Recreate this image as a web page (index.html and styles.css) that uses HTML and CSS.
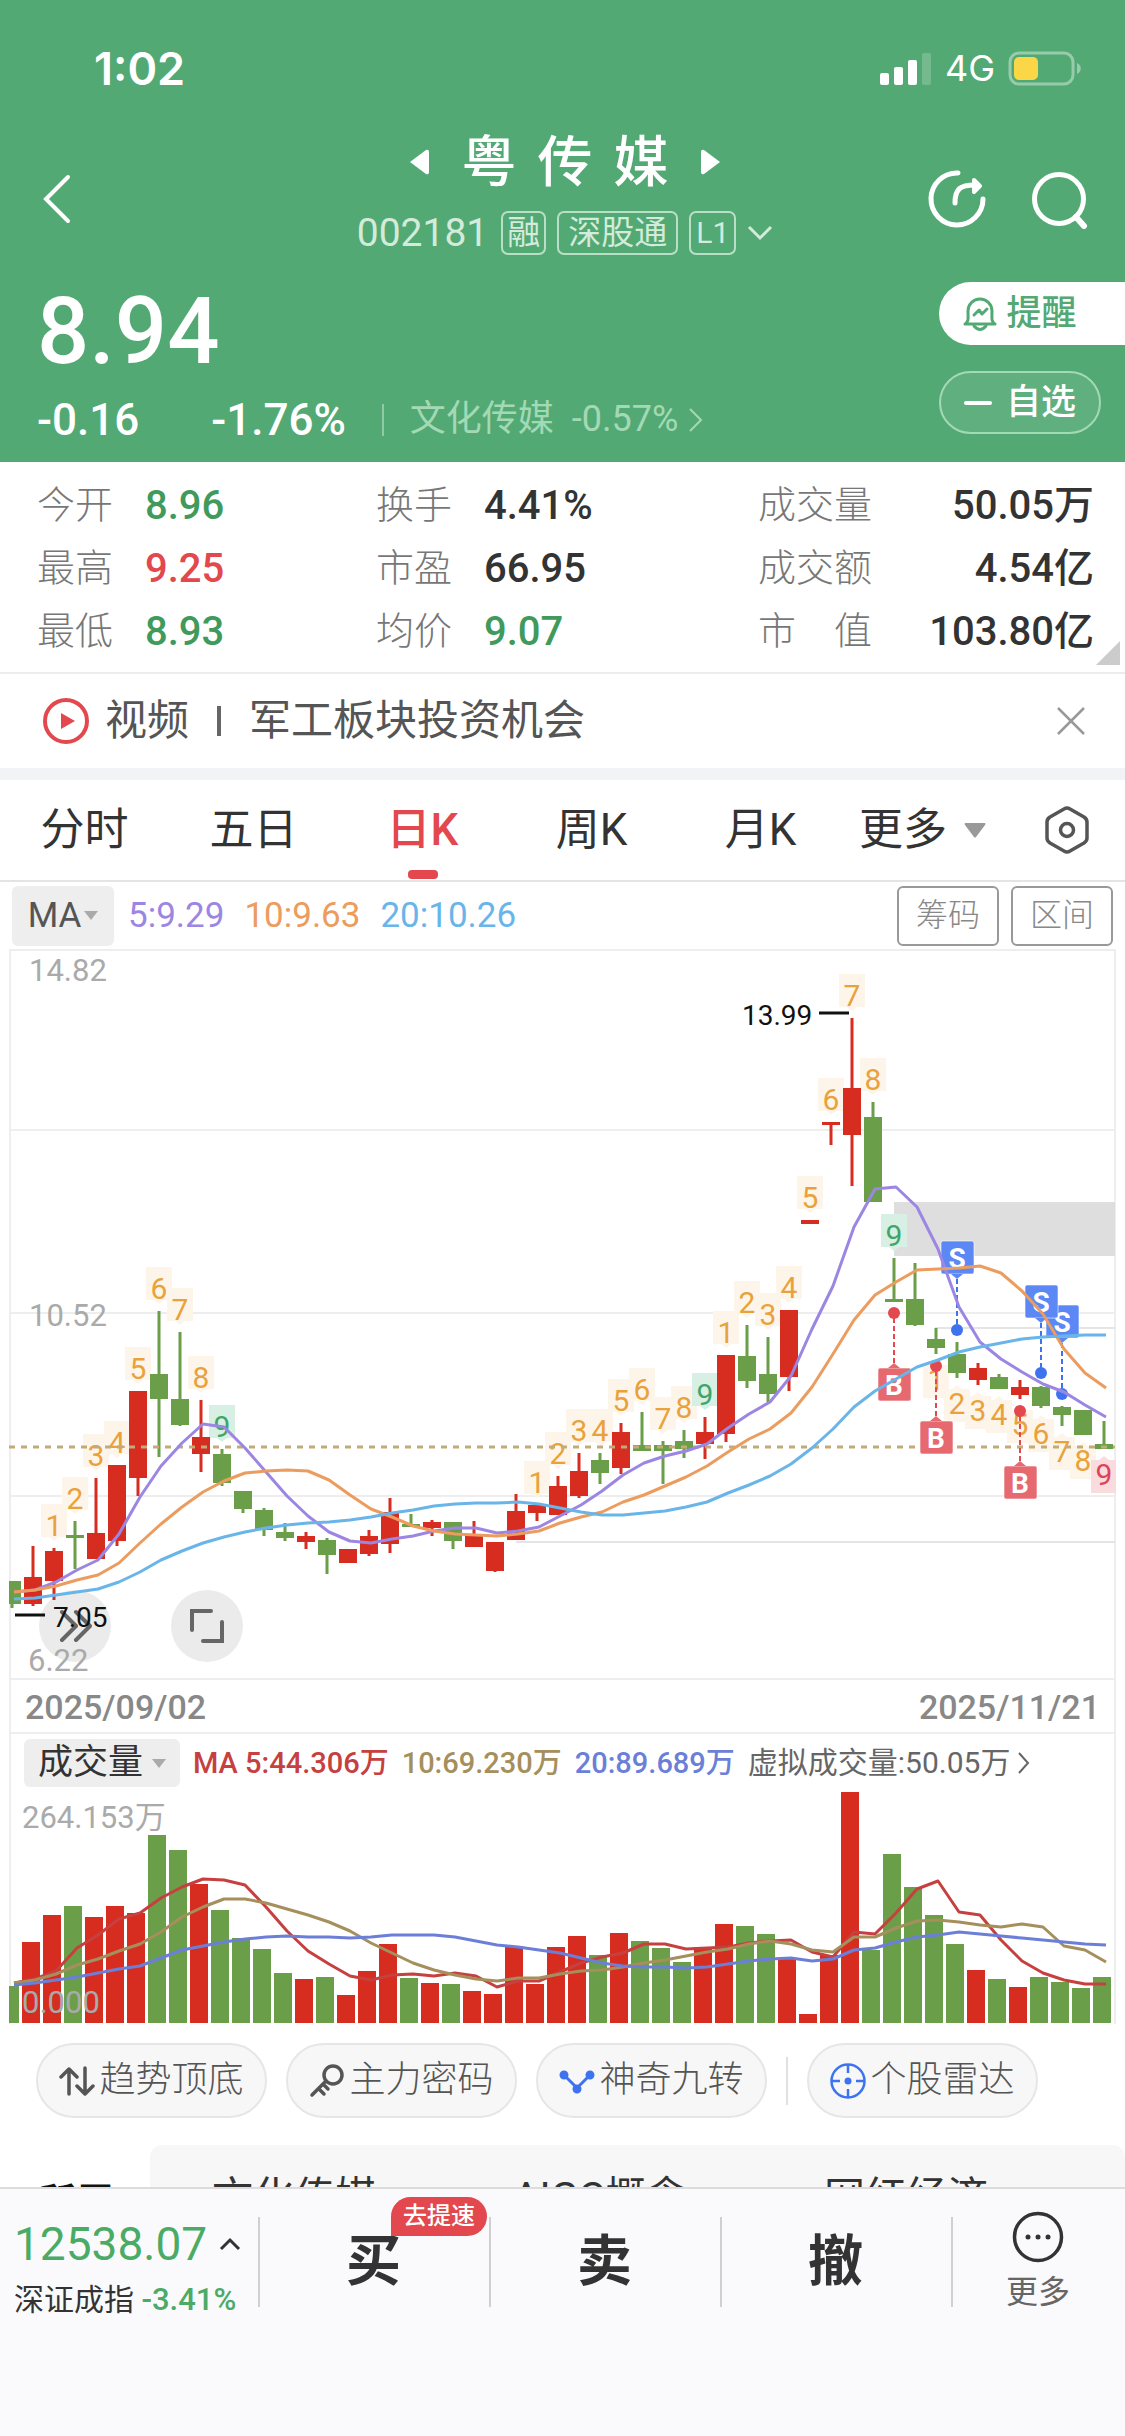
FILE: index.html
```
<!DOCTYPE html>
<html lang="zh-CN">
<head>
    <meta charset="UTF-8">
    <meta name="viewport" content="width=device-width, initial-scale=1.0">
    <title>粤传媒 002181</title>
    <link rel="stylesheet" href="styles.css">
</head>
<body>
    <div class="app">
        <main class="content">
            <header class="quote">
                <div class="status">
                    <span class="status-time">1:02</span>
                    <div class="status-right">
                        <svg width="52" height="32" viewBox="0 0 52 32" fill="#fff">
                            <rect x="0" y="20" width="9" height="12" rx="2"/>
                            <rect x="14" y="14" width="9" height="18" rx="2"/>
                            <rect x="28" y="7" width="9" height="25" rx="2"/>
                            <rect x="42" y="0" width="9" height="32" rx="2" opacity=".2"/>
                        </svg>
                        <span class="status-net">4G</span>
                        <svg width="74" height="36" viewBox="0 0 74 36">
                            <rect x="2" y="2" width="63" height="31" rx="9" fill="none" stroke="#fff" stroke-opacity=".4" stroke-width="3"/>
                            <rect x="6" y="6" width="24" height="23" rx="5" fill="#fbd748"/>
                            <path d="M69 12c5 2 5 9 0 11z" fill="#fff" fill-opacity=".4"/>
                        </svg>
                    </div>
                </div>

                <div class="nav">
                    <button class="icon-btn back" aria-label="返回">
                        <svg width="30" height="52" viewBox="0 0 30 52" fill="none" stroke="#fff" stroke-width="4" stroke-linecap="round"><path d="M26 4 4 26l22 22"/></svg>
                    </button>
                    <div class="stock">
                        <div class="stock-name">
                            <button class="icon-btn" aria-label="上一只"><svg width="19" height="26" viewBox="0 0 19 26" fill="#fff"><path d="M0 13 16 1q3-1 3 2v20q0 3-3 2z"/></svg></button>
                            <h1><span>粤</span><span>传</span><span>媒</span></h1>
                            <button class="icon-btn" aria-label="下一只"><svg width="19" height="26" viewBox="0 0 19 26" fill="#fff"><path d="M19 13 3 1Q0 0 0 3v20q0 3 3 2z"/></svg></button>
                        </div>
                        <div class="stock-code">
                            <span class="code">002181</span>
                            <span class="tag tag-tight">融</span>
                            <span class="tag">深股通</span>
                            <span class="tag tag-level">L1</span>
                            <svg width="26" height="16" viewBox="0 0 26 16" fill="none" stroke="#d4ebdc" stroke-width="3"><path d="m2 2 11 11L24 2"/></svg>
                        </div>
                    </div>
                    <div class="nav-actions">
                        <button class="icon-btn" aria-label="分享">
                            <svg width="58" height="60" viewBox="0 0 58 60" fill="none" stroke="#fff" stroke-width="5" stroke-linecap="round" stroke-linejoin="round">
                                <path d="M30 4A26 26 0 1 0 55 30"/>
                                <path d="M27 34c0-14 5-18 20-18"/>
                                <path d="M46 11l6 6-6 6z" fill="#fff" stroke-width="4"/>
                            </svg>
                        </button>
                        <button class="icon-btn" aria-label="搜索">
                            <svg width="58" height="60" viewBox="0 0 58 60" fill="none" stroke="#fff" stroke-width="5" stroke-linecap="round">
                                <circle cx="29" cy="30" r="24.500"/>
                                <path d="m46 48 8 9" stroke-width="6"/>
                            </svg>
                        </button>
                    </div>
                </div>

                <div class="price-row">
                    <div class="price-box">
                        <div class="price">8.94</div>
                        <div class="change">
                            <span>-0.16</span>
                            <span class="change-pct">-1.76%</span>
                            <a class="industry" href="#industry">
                                <span>文化传媒</span>
                                <span>-0.57%</span>
                                <svg width="16" height="26" viewBox="0 0 16 26" fill="none" stroke="currentColor" stroke-width="2"><path d="m2 2 11 11L2 24"/></svg>
                            </a>
                        </div>
                    </div>
                    <div class="price-actions">
                        <button class="pill pill-alert">
                            <svg width="34" height="36" viewBox="0 0 34 36" fill="none" stroke="currentColor" stroke-width="3" stroke-linecap="round" stroke-linejoin="round">
                                <path d="M2 28c4-2 3-6 3-13a12 12 0 0 1 24 0c0 7-1 11 3 13z"/>
                                <path d="M11 30q6 7 12 0"/>
                                <path d="m11 19 5-5 3 4 5-5"/>
                            </svg>
                            提醒
                        </button>
                        <button class="pill pill-watch">
                            <svg width="28" height="4" viewBox="0 0 28 4"><rect width="28" height="4" rx="2" fill="#fff"/></svg>
                            自选
                        </button>
                    </div>
                </div>
            </header>

            <section class="stats">
                <dl>
                    <div><dt>今开</dt><dd class="down">8.96</dd></div>
                    <div><dt>最高</dt><dd class="up">9.25</dd></div>
                    <div><dt>最低</dt><dd class="down">8.93</dd></div>
                </dl>
                <dl>
                    <div><dt>换手</dt><dd>4.41%</dd></div>
                    <div><dt>市盈</dt><dd>66.95</dd></div>
                    <div><dt>均价</dt><dd class="down">9.07</dd></div>
                </dl>
                <dl class="stats-wide">
                    <div><dt>成交量</dt><dd>50.05万</dd></div>
                    <div><dt>成交额</dt><dd>4.54亿</dd></div>
                    <div><dt>市　值</dt><dd>103.80亿</dd></div>
                </dl>
            </section>

            <section class="news">
                <svg width="46" height="46" viewBox="0 0 46 46"><circle cx="23" cy="23" r="21" fill="none" stroke="#e2484d" stroke-width="4"/><path d="m18 15 14 8-14 8z" fill="#e2484d"/></svg>
                <a href="#video"><span>视频</span><span class="news-bar"></span><span>军工板块投资机会</span></a>
                <button class="icon-btn news-close" aria-label="关闭">
                    <svg width="28" height="28" viewBox="0 0 28 28" stroke="#999" stroke-width="2.500"><path d="m1 1 26 26M27 1 1 27"/></svg>
                </button>
            </section>

            <nav class="tabs">
                <button>分时</button>
                <button>五日</button>
                <button class="active">日K</button>
                <button>周K</button>
                <button>月K</button>
                <button class="tab-more">更多 <svg width="22" height="15" viewBox="0 0 22 15" fill="#999"><path d="M1 0h20q1 1 0 2L12 14q-1 1-2 0L1 2q-1-1 0-2z"/></svg></button>
                <button aria-label="设置">
                    <svg width="44" height="48" viewBox="0 0 44 48" fill="none" stroke="#555" stroke-width="3.500" stroke-linejoin="round"><path d="M19 3q3-2 6 0l14 8q3 2 3 5v16q0 3-3 5l-14 8q-3 2-6 0L5 37q-3-2-3-5V16q0-3 3-5z"/><circle cx="22" cy="24" r="6.500"/></svg>
                </button>
            </nav>

            <div class="ma-row">
                <button class="ma-select">MA <svg width="14" height="9" viewBox="0 0 14 9" fill="#aaa"><path d="M0 0h14L7 9z"/></svg></button>
                <span class="ma5">5:9.29</span>
                <span class="ma10">10:9.63</span>
                <span class="ma20">20:10.26</span>
                <div class="ma-actions">
                    <button>筹码</button>
                    <button>区间</button>
                </div>
            </div>

            <section class="charts">
                <div class="kline">
                    <svg id="kline" viewBox="9 0 1107 731"></svg>
                    <div class="kline-tools">
                        <button aria-label="展开"><svg width="34" height="34" viewBox="0 0 34 34" fill="none" stroke="#666" stroke-width="4" stroke-linecap="round" stroke-linejoin="round"><path d="m4 3 14 14L4 31M18 3l14 14-14 14"/></svg></button>
                        <button aria-label="全屏"><svg width="34" height="34" viewBox="0 0 34 34" fill="none" stroke="#666" stroke-width="4" stroke-linecap="round"><path d="M2 21V2h19M32 13v19H13"/></svg></button>
                    </div>
                </div>
                <div class="dates"><time>2025/09/02</time><time>2025/11/21</time></div>
                <div class="volume-head">
                    <button class="volume-select">成交量 <svg width="14" height="9" viewBox="0 0 14 9" fill="#aaa"><path d="M0 0h14L7 9z"/></svg></button>
                    <span class="v5">MA 5:44.306万</span>
                    <span class="v10">10:69.230万</span>
                    <span class="v20">20:89.689万</span>
                    <a href="#volume">虚拟成交量:50.05万 <svg width="12" height="22" viewBox="0 0 12 22" fill="none" stroke="#666" stroke-width="2"><path d="m1 1 9 10-9 10"/></svg></a>
                </div>
                <svg id="volume" viewBox="9 0 1107 234"></svg>
            </section>

            <div class="chips">
                <button>
                    <svg width="36" height="30" viewBox="0 0 36 30" fill="none" stroke="#555" stroke-width="3.500" stroke-linecap="round" stroke-linejoin="round"><path d="M10 28V3M2 11l8-8 8 8M26 2v25M18 20l8 8 8-8"/></svg>
                    趋势顶底
                </button>
                <button>
                    <svg width="36" height="34" viewBox="0 0 36 34" fill="none" stroke="#555" stroke-width="3.500" stroke-linecap="round"><circle cx="24" cy="11" r="9"/><path d="M17 17 3 31M10 25l5 5M14 20l5 5"/></svg>
                    主力密码
                </button>
                <button>
                    <svg width="36" height="26" viewBox="0 0 36 26" fill="#3e73f0" stroke="#3e73f0" stroke-width="3"><path d="M5 7 18 20 31 7" fill="none"/><circle cx="5" cy="7" r="3"/><circle cx="18" cy="21" r="3"/><circle cx="31" cy="7" r="3"/></svg>
                    神奇九转
                </button>
                <span class="chips-line"></span>
                <button>
                    <svg width="36" height="36" viewBox="0 0 36 36" fill="none" stroke="#3e73f0" stroke-width="2.500"><circle cx="18" cy="18" r="16.500"/><path d="M18 2v8M18 26v8M2 18h8M26 18h8"/><circle cx="18" cy="18" r="3.500" fill="#3e73f0" stroke="none"/></svg>
                    个股雷达
                </button>
            </div>

            <section class="concepts">
                <h2>所属</h2>
                <div class="concept-list"><a href="#c1">文化传媒</a><a href="#c2">AIGC概念</a><a href="#c3">网红经济</a></div>
            </section>
        </main>

        <footer class="trade">
            <button class="index">
                <span class="index-value">12538.07 <svg width="22" height="14" viewBox="0 0 22 14" fill="none" stroke="#333" stroke-width="3"><path d="m2 12 9-9 9 9"/></svg></span>
                <span class="index-name">深证成指 <b>-3.41%</b></span>
            </button>
            <button class="trade-btn">买<span class="badge">去提速</span></button>
            <button class="trade-btn">卖</button>
            <button class="trade-btn">撤</button>
            <button class="more">
                <svg width="52" height="52" viewBox="0 0 52 52" fill="none" stroke="#333" stroke-width="3.500"><circle cx="26" cy="26" r="23.500"/><g fill="#333" stroke="none"><circle cx="16" cy="26" r="2.500"/><circle cx="26" cy="26" r="2.500"/><circle cx="36" cy="26" r="2.500"/></g></svg>
                更多
            </button>
        </footer>
    </div>
    <script src="chart.js"></script>
</body>
</html>
```
FILE: styles.css
```
:root {
    --green: #53a974;
    --down: #3f9a5c;
    --up: #e2484d;
    --text: #333;
    --muted: #888;
    --line: #eee;
    --font: Roboto, "Noto Sans CJK SC", sans-serif;
}

* {
    box-sizing: border-box;
    margin: 0;
    padding: 0;
}

body {
    background: #fff;
    color: var(--text);
    font-family: var(--font);
    line-height: 1.2;
}

button {
    background: none;
    border: none;
    color: inherit;
    font: inherit;
    cursor: pointer;
}

a {
    color: inherit;
    text-decoration: none;
}

svg {
    display: block;
    flex: none;
}

.app {
    height: 100vh;
    display: flex;
    flex-direction: column;
}

.content {
    flex: 1;
    min-height: 0;
    overflow-y: auto;
    scrollbar-width: none;
}

.icon-btn {
    display: flex;
}

/* header */
.quote {
    background: var(--green);
    color: #fff;
    height: 462px;
}

.status {
    height: 138px;
    padding: 0 43px 0 94px;
    display: flex;
    align-items: center;
    justify-content: space-between;
    font-family: Inter, sans-serif;
}

.status-time {
    font-size: 45px;
    font-weight: 600;
}

.status-right {
    display: flex;
    align-items: center;
    gap: 13px;
}

.status-net {
    font-size: 36px;
}

.nav {
    height: 122px;
    padding: 0 37px 0 42px;
    display: grid;
    grid-template-columns: 1fr auto 1fr;
    align-items: center;
}

.stock {
    align-self: start;
}

.stock-name,
.stock-code {
    display: flex;
    align-items: center;
    justify-content: center;
}

.stock-name {
    height: 48px;
    gap: 32px;
}

.stock-name h1 {
    display: flex;
    gap: 21px;
    font-size: 55px;
    font-weight: 500;
    line-height: 48px;
}

.stock-code {
    margin-top: 24px;
    gap: 11px;
    color: #d4ebdc;
}

.code {
    font-size: 39px;
    margin-right: 2px;
}

.tag {
    height: 44px;
    padding: 0 9px;
    border: 2px solid #b9dfc6;
    border-radius: 7px;
    font-size: 33px;
    line-height: 40px;
}

.tag-tight {
    padding: 0 4px;
}

.tag-level {
    padding: 0 5px;
    font-size: 30px;
}

.nav-actions {
    display: flex;
    justify-content: flex-end;
    gap: 44px;
}

.price-row {
    display: flex;
    justify-content: space-between;
}

.price-box {
    padding: 40px 0 0 37px;
}

.price {
    font-size: 92px;
    font-weight: 500;
    line-height: 64px;
}

.change {
    height: 48px;
    margin-top: 32px;
    display: flex;
    align-items: center;
    font-size: 44px;
    font-weight: 500;
}

.change-pct {
    margin-left: 72px;
}

.industry {
    height: 32px;
    margin-left: 36px;
    padding-left: 26px;
    border-left: 2px solid #8fcaa4;
    display: flex;
    align-items: center;
    gap: 18px;
    color: #a3d9b5;
    font-size: 36px;
    font-weight: 400;
}

.industry svg {
    margin-left: -8px;
}

.price-actions {
    padding-top: 22px;
    display: flex;
    flex-direction: column;
    gap: 26px;
}

.pill {
    width: 162px;
    height: 63px;
    border-radius: 32px;
    display: flex;
    align-items: center;
    justify-content: center;
    gap: 9px;
    font-size: 35px;
    font-weight: 500;
}

.pill-alert {
    width: 186px;
    padding-right: 24px;
    border-radius: 32px 0 0 32px;
    background: #fff;
    color: var(--green);
}

.pill-watch {
    gap: 14px;
    border: 2px solid #a3d9b5;
    background: rgba(255, 255, 255, 0.08);
}

/* quote numbers */
.stats {
    position: relative;
    padding: 12px 31px 9px 37px;
    border-bottom: 2px solid #ececec;
    display: grid;
    grid-template-columns: 339fr 382fr 336fr;
}

.stats::after {
    content: "";
    position: absolute;
    right: 5px;
    bottom: 7px;
    border: 12px solid transparent;
    border-right-color: #ccc;
    border-bottom-color: #ccc;
}

.stats dl > div {
    height: 63px;
    display: flex;
    align-items: center;
    gap: 32px;
}

.stats .stats-wide > div {
    justify-content: space-between;
}

dt {
    color: #777;
    font-size: 38px;
    font-weight: 300;
}

dd {
    font-size: 40px;
    font-weight: 500;
}

.down {
    color: var(--down);
}

.up {
    color: var(--up);
}

.news {
    height: 106px;
    padding: 0 40px 0 43px;
    border-bottom: 12px solid #f2f3f7;
    display: flex;
    align-items: center;
    gap: 16px;
    color: #555;
    font-size: 42px;
}

.news a {
    display: flex;
    align-items: center;
    gap: 28px;
}

.news-bar {
    width: 4px;
    height: 30px;
    background: #666;
}

.news-close {
    margin-left: auto;
}

.tabs {
    height: 102px;
    border-bottom: 2px solid #e4e4e4;
    display: grid;
    grid-template-columns: repeat(5, 169fr) 164fr 116fr;
    font-size: 44px;
}

.tabs button {
    position: relative;
    display: flex;
    align-items: center;
    justify-content: center;
    gap: 17px;
}

.tabs .tab-more {
    justify-content: flex-start;
    padding-left: 14px;
}

.tabs .active {
    color: var(--up);
    font-weight: 500;
}

.tabs .active::after {
    content: "";
    position: absolute;
    bottom: 1px;
    width: 30px;
    height: 9px;
    border-radius: 4px;
    background: var(--up);
}

.ma-row {
    height: 67px;
    padding: 0 12px;
    display: flex;
    align-items: center;
    gap: 20px;
    font-size: 35px;
}

.ma-select {
    width: 102px;
    height: 60px;
    margin-right: -6px;
    border-radius: 6px;
    background: #eee;
    display: flex;
    align-items: center;
    justify-content: center;
    gap: 3px;
    color: #555;
}

.ma5 { color: #9b86e3; }
.ma10 { color: #eb9c5e; }
.ma20 { color: #69b5ea; }

.ma-actions {
    margin-left: auto;
    display: flex;
    gap: 12px;
}

.ma-actions button {
    width: 102px;
    height: 60px;
    border: 2px solid #999;
    border-radius: 6px;
    color: var(--muted);
    font-size: 32px;
    font-weight: 300;
}

/* charts */
.charts {
    margin: 0 9px;
}

.charts > svg,
.kline > svg {
    width: 100%;
    height: auto;
}

.kline {
    position: relative;
}

/* prices stay readable above the round tool buttons */
.kline > svg {
    position: relative;
    z-index: 1;
    pointer-events: none;
}

.kline-tools {
    position: absolute;
    left: 30px;
    bottom: 18px;
    display: flex;
    gap: 60px;
}

.kline-tools button {
    width: 72px;
    height: 72px;
    border-radius: 50%;
    background: #ebebeb;
    display: flex;
    align-items: center;
    justify-content: center;
}

.dates {
    height: 54px;
    padding: 2px 14px 0 14px;
    border: solid var(--line);
    border-width: 0 2px 2px;
    display: flex;
    align-items: center;
    justify-content: space-between;
    color: var(--muted);
    font-size: 34px;
    font-weight: 500;
}

.volume-head {
    height: 56px;
    padding: 2px 0 0 13px;
    border: solid var(--line);
    border-width: 0 2px;
    display: flex;
    align-items: center;
    gap: 13px;
    font-size: 29px;
    font-weight: 500;
    white-space: nowrap;
}

.volume-select {
    width: 156px;
    height: 48px;
    border-radius: 6px;
    background: #eee;
    display: flex;
    align-items: center;
    justify-content: center;
    gap: 9px;
    font-size: 35px;
    font-weight: 400;
}

.v5 { color: #c6403f; }
.v10 { color: #a58f5c; }
.v20 { color: #6c7fd8; }

.volume-head a {
    display: flex;
    align-items: center;
    gap: 8px;
    color: #666;
    font-size: 30px;
    font-weight: 400;
}

.grid { stroke: #eee; stroke-width: 2; fill: none; }
.rise { fill: #d62d20; }
.fall { fill: #6b9e48; }
.avg { fill: none; stroke-width: 3; stroke-linejoin: round; }
.axis { fill: #aaa; font-size: 31px; }
.extreme { fill: #111; font-size: 28px; }
.count { font-size: 30px; text-anchor: middle; }
.mark { fill: #fff; font-size: 28px; font-weight: 700; text-anchor: middle; }

/* shortcuts */
.chips {
    padding: 19px 36px 0;
    display: flex;
    align-items: center;
    gap: 19px;
}

.chips button {
    width: 231px;
    height: 75px;
    border: 2px solid #e6e6e6;
    border-radius: 38px;
    background: #f7f7f7;
    display: flex;
    align-items: center;
    justify-content: center;
    gap: 4px;
    color: #555;
    font-size: 36px;
    font-weight: 300;
    white-space: nowrap;
}

.chips-line {
    width: 2px;
    height: 48px;
    background: #e0e0e0;
}

.concepts {
    margin-top: 27px;
    padding-left: 38px;
    display: flex;
    align-items: center;
}

.concepts h2 {
    width: 112px;
    padding-top: 10px;
    color: #111;
    font-size: 38px;
    font-weight: 700;
    white-space: nowrap;
}

.concept-list {
    flex: 1;
    height: 106px;
    padding: 0 137px 0 62px;
    border-radius: 12px;
    background: #f7f7f7;
    display: flex;
    align-items: center;
    justify-content: space-between;
    font-size: 41px;
}

/* bottom bar */
.trade {
    height: 249px;
    border-top: 2px solid #dcdcdc;
    background: #fafafc;
    display: grid;
    grid-template-columns: 258fr 231fr 231fr 231fr 174fr;
}

.trade button {
    position: relative;
    height: 144px;
}

.index {
    padding: 14px 0 0 14px;
    display: flex;
    flex-direction: column;
    justify-content: center;
    align-items: flex-start;
    gap: 14px;
    white-space: nowrap;
}

.index-value {
    display: flex;
    align-items: center;
    gap: 12px;
    color: #4aab66;
    font-size: 46px;
    line-height: 50px;
}

.index-name {
    font-size: 30px;
    line-height: 34px;
}

.index b {
    color: #4aab66;
    font-size: 31px;
    font-weight: 500;
}

.trade-btn {
    font-size: 55px;
    font-weight: 700;
}

.trade-btn::before,
.more::before {
    content: "";
    position: absolute;
    left: 0;
    top: 28px;
    width: 2px;
    height: 90px;
    background: #d0d0d0;
}

.badge {
    position: absolute;
    left: 133px;
    top: 8px;
    height: 39px;
    padding: 0 12px;
    border-radius: 20px 20px 20px 0;
    background: var(--up);
    color: #fff;
    font-size: 24px;
    font-weight: 500;
    line-height: 38px;
    white-space: nowrap;
}

.more {
    display: flex;
    flex-direction: column;
    align-items: center;
    justify-content: center;
    gap: 10px;
    color: #666;
    font-size: 32px;
}
```
FILE: chart.js
```
const STEP = 21;
const FIRST = 12;

// [body top, body bottom, high, low, 1 = rise]
const candles = [
    [632,655,632,659,0],[628,655,597,657,1],[602,632,599,651,1],[586,589,572,620,0],[584,610,529,610,1],
    [516,592,516,597,1],[442,529,442,547,1],[425,450,362,508,0],[450,476,383,477,0],[488,505,451,523,1],
    [505,534,500,537,0],[542,560,542,564,0],[561,581,559,587,0],[583,589,574,592,0],[587,593,583,600,1],
    [591,606,589,625,0],[600,614,600,614,1],[587,605,581,607,1],[563,595,549,604,1],[575,578,565,578,0],
    [573,579,571,587,1],[573,592,573,600,0],[586,598,572,598,1],[593,622,593,623,1],[562,591,545,591,1],
    [556,564,556,572,1],[537,566,527,566,1],[522,547,504,549,1],[511,524,504,535,0],[483,519,474,525,1],
    [496,502,463,502,0],[496,502,492,535,0],[492,500,481,509,0],[483,495,468,510,1],[406,485,406,493,1],
    [407,432,376,439,0],[425,445,388,453,0],[361,428,361,442,1],[271,275,271,275,1],[173,176,173,196,1],
    [139,186,69,237,1],[168,253,153,253,0],[350,353,309,353,0],[350,376,314,377,0],[390,399,379,405,0],
    [405,424,393,429,0],[419,431,414,436,1],[428,440,425,440,0],[438,446,431,450,1],[438,457,437,459,0],
    [458,466,457,477,0],[461,486,461,486,0],[495,500,472,500,0]
];

const ma = {
    '#9b86e3': [643,641,633,621,611,585,548,517,494,475,478,499,523,547,567,583,592,594,590,587,582,579,579,584,582,578,567,556,542,526,514,507,502,495,479,465,453,427,380,337,278,240,238,258,300,358,393,410,423,435,443,456,468],
    '#eb9c5e': [643,641,637,631,626,614,594,575,558,543,532,524,522,521,522,531,546,560,568,577,582,585,586,587,585,582,574,568,563,553,546,537,528,517,503,490,480,464,438,405,371,346,333,321,320,319,317,324,342,365,400,424,439],
    '#69b5ea': [650,649,646,643,640,633,623,611,602,594,588,583,579,576,574,573,571,568,564,561,557,555,554,554,553,555,559,563,566,566,564,562,558,553,544,536,527,515,499,480,458,442,430,418,411,403,398,394,390,388,387,386,386]
};

const volumes = [196,152,125,116,127,116,123,45,60,94,120,148,159,183,189,187,205,181,154,188,193,194,201,204,156,194,157,146,165,143,151,158,172,157,134,136,144,168,224,165,2,160,64,97,125,154,180,189,197,187,192,198,187];

const volumeMa = {
    '#c6403f': [193,189,181,158,145,129,123,108,97,89,90,95,117,141,161,174,186,190,185,184,186,183,186,197,191,191,182,173,167,163,154,154,159,158,157,153,151,150,162,167,142,144,123,99,91,122,125,150,171,183,190,194,194],
    '#a58f5c': [193,190,184,175,169,161,154,142,127,117,109,109,113,119,125,132,141,153,163,173,180,185,189,191,188,188,184,181,180,177,173,170,166,162,159,154,151,154,160,162,147,147,138,131,130,132,135,137,134,137,156,160,172],
    '#6c7fd8': [195,193,190,187,183,179,176,168,160,156,152,149,147,146,147,147,148,147,145,145,145,147,151,155,157,160,163,168,173,176,177,177,178,177,174,171,169,168,171,169,160,158,152,147,145,142,144,146,148,150,152,154,155]
};

// nine-turn counts: [first candle, where the number sits, colour of the 9]
const turns = [
    [2, 'above', '#3fa56a', '#d8efe3'],
    [25, 'above', '#3fa56a', '#d8efe3'],
    [34, 'above', '#3fa56a', '#d8efe3'],
    [44, 'below', '#dd4458', '#fadcde']
];

// [type, candle, dot y, box top]
const trades = [
    ['S', 50, 445, 356], ['S', 45, 381, 292], ['S', 49, 424, 336],
    ['B', 42, 364, 419], ['B', 44, 417, 472], ['B', 48, 462, 517]
];

const x = i => FIRST + i * STEP;
const cls = up => up ? 'rise' : 'fall';
const line = (values, color) =>
    `<polyline class="avg" stroke="${color}" points="${values.map((y, i) => `${x(i) + 2},${y}`).join(' ')}"/>`;

function drawKline() {
    let s = '';
    [1, 181, 364, 547, 730].forEach(y => s += `<path class="grid" d="M9 ${y}H1116"/>`);
    s += '<path class="grid" d="M10 0V731M1115 0V731"/>';
    s += '<rect x="894" y="253" width="221" height="54" fill="#dedede"/>';
    s += '<path d="M935 379H1115M516 593H1115" stroke="#ddd" stroke-width="1.5"/>';
    s += '<text class="axis" x="29" y="32">14.82</text><text class="axis" x="29" y="377">10.52</text>';

    turns.forEach(([start, side, nine, nineBg]) => {
        for (let n = 1; n <= 9; n++) {
            const c = candles[start + n - 1];
            const cx = x(start + n - 1);
            const top = side === 'above' ? c[2] - 44 : c[3] + 11;
            const tip = side === 'above' ? top + 37 : top - 4;
            const edge = side === 'above' ? top + 33 : top;
            s += `<g fill="${n === 9 ? nineBg : '#fdf5ea'}"><rect x="${cx - 13}" y="${top}" width="26" height="33"/>`;
            s += `<path d="M${cx - 5} ${edge}L${cx} ${tip}L${cx + 5} ${edge}z"/></g>`;
            s += `<text class="count" x="${cx}" y="${top + (side === 'above' ? 32 : 25)}" fill="${n === 9 ? nine : '#e9a23b'}">${n}</text>`;
        }
    });

    candles.forEach(([top, bottom, high, low, up], i) => {
        const left = Math.max(9, x(i) - 9);
        s += `<g class="${cls(up)}"><rect x="${left}" y="${top}" width="${x(i) + 9 - left}" height="${bottom - top}"/>`;
        s += `<rect x="${x(i) - 1.5}" y="${high}" width="3" height="${low - high}"/></g>`;
    });

    s += '<path d="M9 498H1115" stroke="#c2ab78" stroke-width="3" stroke-dasharray="6 6"/>';

    trades.forEach(([type, i, dot, top]) => {
        const sell = type === 'S';
        const cx = x(i);
        const color = sell ? '#3e73f0' : '#e2484d';
        const fill = sell ? '#5b88f5' : '#e6696f';
        const edge = sell ? top + 33 : top;
        const tip = sell ? top + 38 : top - 5;
        s += `<path d="M${cx} ${tip}V${dot}" stroke="${color}" stroke-width="2" stroke-dasharray="5 3"/>`;
        s += `<circle cx="${cx}" cy="${dot}" r="6" fill="${color}"/>`;
        s += `<g fill="${fill}"><rect x="${cx - 16}" y="${top}" width="33" height="33" rx="2" stroke="#fff" stroke-opacity=".6"/><path d="M${cx - 6} ${edge}L${cx} ${tip}L${cx + 6} ${edge}z"/></g>`;
        s += `<text class="mark" x="${cx}" y="${top + 27}">${type}</text>`;
    });

    for (const color in ma) s += line(ma[color], color);

    s += '<path d="M15 666H45M819 64H849" stroke="#111" stroke-width="3"/>';
    s += '<text class="extreme" x="53" y="678">7.05</text><text class="extreme" x="742" y="76">13.99</text>';
    s += '<text class="axis" x="28" y="722">6.22</text>';
    document.getElementById('kline').innerHTML = s;
}

function drawVolume() {
    let s = '<path class="grid" d="M10 0V234M1115 0V234"/>';
    volumes.forEach((y, i) => {
        const left = Math.max(9, x(i) - 11);
        s += `<rect class="${cls(candles[i][4])}" x="${left}" y="${y}" width="${x(i) + 7 - left}" height="${233 - y}"/>`;
    });
    for (const color in volumeMa) s += line(volumeMa[color], color);
    s += '<text class="axis" x="22" y="38">264.153万</text><text class="axis" x="22" y="223">0.000</text>';
    document.getElementById('volume').innerHTML = s;
}

drawKline();
drawVolume();
```
